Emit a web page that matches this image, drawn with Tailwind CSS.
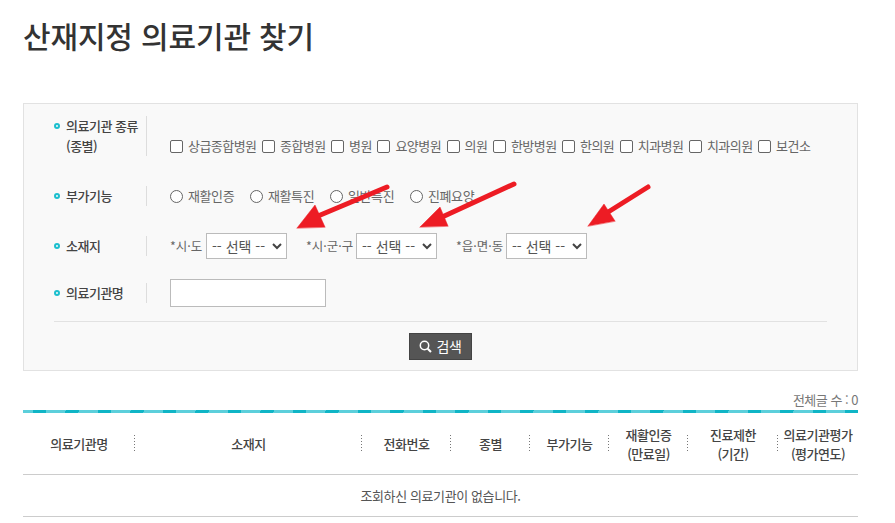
<!DOCTYPE html>
<html lang="ko">
<head>
  <meta charset="UTF-8" />
  <title>산재지정 의료기관 찾기</title>
  <script src="https://cdn.jsdelivr.net/npm/@tailwindcss/browser@4"></script>
</head>
<body class="bg-white font-['Noto_Sans_CJK_KR',sans-serif] text-[#555] overflow-hidden">
  <div class="relative w-[895px] h-[523px] overflow-hidden px-[23px] pr-[37px]">
    <h1 class="pt-[13px] h-[103px] text-[30px] leading-[44px] font-medium text-[#333] tracking-[-0.15px]">산재지정 의료기관 찾기</h1>

    <form class="border border-[#e2e2e2] bg-[#f9f9f9] h-[268px] pt-[12px] px-[30px]">
      <div class="flex h-[40px] items-center">
        <div class="w-[93px] h-full border-r border-[#ddd] flex text-[13px] leading-[20px] font-medium text-[#444] tracking-[-0.5px]">
          <span class="w-[2px] h-[2px] mt-[7px] mr-[6px] rounded-full border-2 border-[#1cbfce] box-content"></span>
          <span>의료기관 종류<br />(종별)</span>
        </div>
        <div class="ml-[23px] mt-[20px] flex items-center text-[13px] tracking-[-0.55px] text-[#666] leading-[20px]">
          <label class="flex items-center mr-[5.5px]"><span class="w-[13px] h-[13px] mr-[5px] rounded-[2px] border border-[#666] bg-white"></span>상급종합병원</label>
          <label class="flex items-center mr-[5.5px]"><span class="w-[13px] h-[13px] mr-[5px] rounded-[2px] border border-[#666] bg-white"></span>종합병원</label>
          <label class="flex items-center mr-[5.5px]"><span class="w-[13px] h-[13px] mr-[5px] rounded-[2px] border border-[#666] bg-white"></span>병원</label>
          <label class="flex items-center mr-[5.5px]"><span class="w-[13px] h-[13px] mr-[5px] rounded-[2px] border border-[#666] bg-white"></span>요양병원</label>
          <label class="flex items-center mr-[5.5px]"><span class="w-[13px] h-[13px] mr-[5px] rounded-[2px] border border-[#666] bg-white"></span>의원</label>
          <label class="flex items-center mr-[5.5px]"><span class="w-[13px] h-[13px] mr-[5px] rounded-[2px] border border-[#666] bg-white"></span>한방병원</label>
          <label class="flex items-center mr-[5.5px]"><span class="w-[13px] h-[13px] mr-[5px] rounded-[2px] border border-[#666] bg-white"></span>한의원</label>
          <label class="flex items-center mr-[5.5px]"><span class="w-[13px] h-[13px] mr-[5px] rounded-[2px] border border-[#666] bg-white"></span>치과병원</label>
          <label class="flex items-center mr-[5.5px]"><span class="w-[13px] h-[13px] mr-[5px] rounded-[2px] border border-[#666] bg-white"></span>치과의원</label>
          <label class="flex items-center"><span class="w-[13px] h-[13px] mr-[5px] rounded-[2px] border border-[#666] bg-white"></span>보건소</label>
        </div>
      </div>

      <div class="flex h-[20px] items-center mt-[30px]">
        <div class="w-[93px] h-full border-r border-[#ddd] flex items-center text-[13px] font-medium text-[#444] tracking-[-0.5px]">
          <span class="w-[2px] h-[2px] mr-[6px] rounded-full border-2 border-[#1cbfce] box-content"></span>
          <span>부가기능</span>
        </div>
        <div class="ml-[23px] flex items-center text-[13px] tracking-[-0.4px] text-[#666]">
          <label class="flex items-center w-[80px]"><span class="w-[13px] h-[13px] mr-[5px] rounded-full border border-[#666] bg-white"></span>재활인증</label>
          <label class="flex items-center w-[80px]"><span class="w-[13px] h-[13px] mr-[5px] rounded-full border border-[#666] bg-white"></span>재활특진</label>
          <label class="flex items-center w-[80px]"><span class="w-[13px] h-[13px] mr-[5px] rounded-full border border-[#666] bg-white"></span>일반특진</label>
          <label class="flex items-center"><span class="w-[13px] h-[13px] mr-[5px] rounded-full border border-[#666] bg-white"></span>진폐요양</label>
        </div>
      </div>

      <div class="flex h-[20px] items-center mt-[30px]">
        <div class="w-[93px] h-full border-r border-[#ddd] flex items-center text-[13px] font-medium text-[#444] tracking-[-0.5px]">
          <span class="w-[2px] h-[2px] mr-[6px] rounded-full border-2 border-[#1cbfce] box-content"></span>
          <span>소재지</span>
        </div>
        <div class="ml-[23px] flex items-center text-[12.5px] text-[#666]">
          <span class="w-[36px]">*시·도</span>
          <div class="w-[81px] h-[26px] border border-[#bbb] bg-white flex items-center justify-between pl-[5px] pr-[4px] text-[14px] text-[#555]">-- 선택 --<svg class="w-[10px] h-[7px]" viewBox="0 0 10 7"><path d="M1 1l4 4 4-4" fill="none" stroke="#444" stroke-width="2" /></svg></div>
          <span class="w-[50px] ml-[19px]">*시·군·구</span>
          <div class="w-[81px] h-[26px] border border-[#bbb] bg-white flex items-center justify-between pl-[5px] pr-[4px] text-[14px] text-[#555]">-- 선택 --<svg class="w-[10px] h-[7px]" viewBox="0 0 10 7"><path d="M1 1l4 4 4-4" fill="none" stroke="#444" stroke-width="2" /></svg></div>
          <span class="w-[50px] ml-[19px]">*읍·면·동</span>
          <div class="w-[81px] h-[26px] border border-[#bbb] bg-white flex items-center justify-between pl-[5px] pr-[4px] text-[14px] text-[#555]">-- 선택 --<svg class="w-[10px] h-[7px]" viewBox="0 0 10 7"><path d="M1 1l4 4 4-4" fill="none" stroke="#444" stroke-width="2" /></svg></div>
        </div>
      </div>

      <div class="flex h-[20px] items-center mt-[27px]">
        <div class="w-[93px] h-full border-r border-[#ddd] flex items-center text-[13px] font-medium text-[#444] tracking-[-0.5px]">
          <span class="w-[2px] h-[2px] mr-[6px] rounded-full border-2 border-[#1cbfce] box-content"></span>
          <span>의료기관명</span>
        </div>
        <div class="ml-[23px] w-[156px] h-[28px] border border-[#bbb] bg-white"></div>
      </div>

      <div class="h-px bg-[#e2e2e2] mt-[18px]"></div>
      <div class="flex justify-center mt-[11px]">
        <div class="w-[63px] h-[27px] bg-[#555] border border-[#444] text-white text-[14px] tracking-[-0.3px] flex items-center justify-center gap-[4px]">
          <svg class="w-[13px] h-[13px]" viewBox="0 0 13 13"><circle cx="5.5" cy="5.5" r="4.2" fill="none" stroke="#fff" stroke-width="1.5" /><path d="M8.7 8.7l3.3 3.3" stroke="#fff" stroke-width="2" /></svg>
          검색
        </div>
      </div>
    </form>

    <p class="h-[39px] pt-[19px] text-right text-[13px] leading-[20px] text-[#777] tracking-[-0.5px]">전체글 수 : 0</p>
    <div class="h-[3px] bg-[repeating-linear-gradient(100deg,#5ccfdb_0_10px,#0fb5c6_10px_23px,#5ccfdb_23px_32px)]"></div>

    <div class="grid grid-cols-[112px_227px_89px_79px_79px_79px_90px_80px] h-[62px] border-b border-[#ccc] text-[13px] leading-[19px] font-medium text-[#444] tracking-[-0.5px] text-center">
      <div class="flex items-center justify-center relative">의료기관명<span class="absolute right-0 top-[22px] h-[18px] w-px bg-[repeating-linear-gradient(#777_0_1px,transparent_1px_3px)]"></span></div>
      <div class="flex items-center justify-center relative">소재지<span class="absolute right-0 top-[22px] h-[18px] w-px bg-[repeating-linear-gradient(#777_0_1px,transparent_1px_3px)]"></span></div>
      <div class="flex items-center justify-center relative">전화번호<span class="absolute right-0 top-[22px] h-[18px] w-px bg-[repeating-linear-gradient(#777_0_1px,transparent_1px_3px)]"></span></div>
      <div class="flex items-center justify-center relative">종별<span class="absolute right-0 top-[22px] h-[18px] w-px bg-[repeating-linear-gradient(#777_0_1px,transparent_1px_3px)]"></span></div>
      <div class="flex items-center justify-center relative">부가기능<span class="absolute right-0 top-[22px] h-[18px] w-px bg-[repeating-linear-gradient(#777_0_1px,transparent_1px_3px)]"></span></div>
      <div class="flex items-center justify-center relative">재활인증<br />(만료일)<span class="absolute right-0 top-[22px] h-[18px] w-px bg-[repeating-linear-gradient(#777_0_1px,transparent_1px_3px)]"></span></div>
      <div class="flex items-center justify-center relative">진료제한<br />(기간)<span class="absolute right-0 top-[22px] h-[18px] w-px bg-[repeating-linear-gradient(#777_0_1px,transparent_1px_3px)]"></span></div>
      <div class="flex items-center justify-center">의료기관평가<br />(평가연도)</div>
    </div>
    <div class="h-[42px] border-b border-[#ccc] flex items-center justify-center text-[13px] text-[#555] tracking-[-0.4px]">조회하신 의료기관이 없습니다.</div>

    <svg class="absolute left-0 top-0 w-[895px] h-[523px] pointer-events-none" viewBox="0 0 895 523">
      <g fill="#ed1c24" stroke="#ed1c24" stroke-linecap="round">
        <path d="M387 187L318 216" stroke-width="5" fill="none" />
        <path d="M297 228L315 205L325 227Z" stroke-width="0.5" />
        <path d="M514 184L440 218" stroke-width="5" fill="none" />
        <path d="M420 227L440 207L448 226Z" stroke-width="0.5" />
        <path d="M648 187L605 214" stroke-width="5" fill="none" />
        <path d="M588 226L604 204L615 221Z" stroke-width="0.5" />
      </g>
    </svg>
  </div>
</body>
</html>
